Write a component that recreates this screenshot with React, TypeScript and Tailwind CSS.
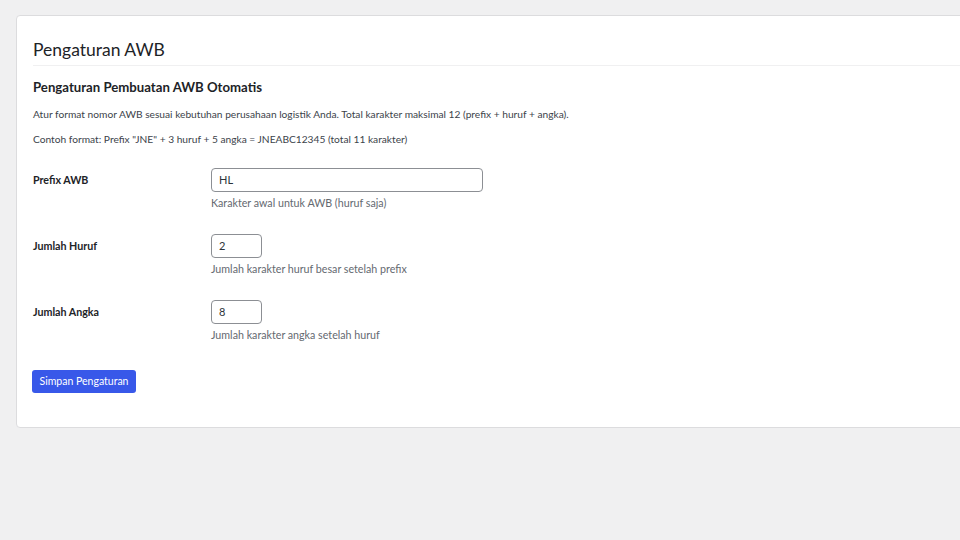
import React, { useState } from 'react';

const font = { fontFamily: 'Lato, "Noto Sans", sans-serif' };

interface FieldProps {
  label: string;
  value: string;
  desc: string;
  wide?: boolean;
  onChange: (v: string) => void;
}

function FieldRow({ label, value, desc, wide, onChange }: FieldProps) {
  return (
    <div className="flex h-[66px]">
      <div className="w-[178px] shrink-0 pt-[19px] text-[10.7px] font-bold leading-[16px] text-[#1d2327]">
        {label}
      </div>
      <div className="pt-[13px]">
        <input
          value={value}
          onChange={(e) => onChange(e.target.value)}
          className={`${wide ? 'w-[272px]' : 'w-[51px]'} h-[24px] rounded-[4px] border border-[#8c8f94] bg-white px-[7px] text-[11px] leading-[22px] text-[#2c3338] outline-none`}
        />
        <p className="mt-[3px] text-[10.7px] leading-[16px] text-[#646970]">{desc}</p>
      </div>
    </div>
  );
}

export default function App() {
  const [prefix, setPrefix] = useState('HL');
  const [huruf, setHuruf] = useState('2');
  const [angka, setAngka] = useState('8');

  return (
    <div className="w-[960px] h-[540px] overflow-hidden bg-[#f0f0f1]" style={font}>
      <div className="ml-[16px] mt-[15px] w-[1000px] rounded-[4px] border border-[#dcdcde] bg-white pl-[16px] pb-[34px]">
        <h1 className="pt-[22px] pb-[3px] text-[17.5px] leading-[24px] font-normal text-[#1d2327] border-b border-[#f0f0f1]">
          Pengaturan AWB
        </h1>
        <h2 className="mt-[11px] text-[13.2px] leading-[20px] font-bold text-[#1d2327]">
          Pengaturan Pembuatan AWB Otomatis
        </h2>
        <p className="mt-[9px] text-[10.2px] leading-[16px] text-[#3c434a]">
          Atur format nomor AWB sesuai kebutuhan perusahaan logistik Anda. Total karakter maksimal 12 (prefix + huruf + angka).
        </p>
        <p className="mt-[9px] text-[10.2px] leading-[16px] text-[#3c434a]">
          Contoh format: Prefix "JNE" + 3 huruf + 5 angka = JNEABC12345 (total 11 karakter)
        </p>
        <div className="mt-[6px]">
          <FieldRow label="Prefix AWB" value={prefix} desc="Karakter awal untuk AWB (huruf saja)" wide onChange={setPrefix} />
          <FieldRow label="Jumlah Huruf" value={huruf} desc="Jumlah karakter huruf besar setelah prefix" onChange={setHuruf} />
          <FieldRow label="Jumlah Angka" value={angka} desc="Jumlah karakter angka setelah huruf" onChange={setAngka} />
        </div>
        <button className="mt-[19px] h-[23px] w-[104px] -ml-[1px] rounded-[3px] bg-[#3858e9] text-[10.5px] leading-[21px] text-white">
          Simpan Pengaturan
        </button>
      </div>
    </div>
  );
}
